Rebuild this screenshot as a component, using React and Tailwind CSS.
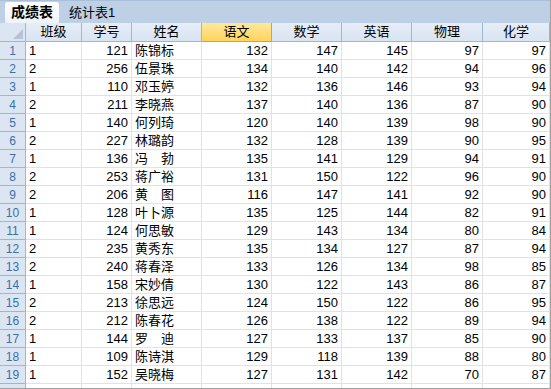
import React from "react";

const rows = [
  ["1", "121", "陈锦标", 132, 147, 145, 97, 97],
  ["2", "256", "伍景珠", 134, 140, 142, 94, 96],
  ["1", "110", "邓玉婷", 132, 136, 146, 93, 94],
  ["2", "211", "李晓燕", 137, 140, 136, 87, 90],
  ["1", "140", "何列琦", 120, 140, 139, 98, 90],
  ["2", "227", "林璐韵", 132, 128, 139, 90, 95],
  ["1", "136", "冯　勃", 135, 141, 129, 94, 91],
  ["2", "253", "蒋广裕", 131, 150, 122, 96, 90],
  ["2", "206", "黄　图", 116, 147, 141, 92, 90],
  ["1", "128", "叶卜源", 135, 125, 144, 82, 91],
  ["1", "124", "何思敏", 129, 143, 134, 80, 84],
  ["2", "235", "黄秀东", 135, 134, 127, 87, 94],
  ["2", "240", "蒋春泽", 133, 126, 134, 98, 85],
  ["1", "158", "宋妙倩", 130, 122, 143, 86, 87],
  ["2", "213", "徐思远", 124, 150, 122, 86, 95],
  ["2", "212", "陈春花", 126, 138, 122, 89, 94],
  ["1", "144", "罗　迪", 127, 133, 137, 85, 90],
  ["1", "109", "陈诗淇", 129, 118, 139, 88, 80],
  ["1", "152", "吴晓梅", 127, 131, 142, 70, 87],
];

const headers = ["班级", "学号", "姓名", "语文", "数学", "英语", "物理", "化学"];
const widths = ["w-[56px]", "w-[50px]", "w-[70px]", "w-[70px]", "w-[70px]", "w-[70px]", "w-[71px]", "w-[67px]"];

const font = { fontFamily: '"Liberation Sans", "Noto Sans CJK SC", sans-serif' };

export default function App() {
  return (
    <div className="w-[551px] h-[389px] overflow-hidden bg-white flex flex-col text-[13px] text-black border-r border-b border-[#a0a0a0]" style={font}>
      {/* tabs */}
      <div className="h-[23px] shrink-0 bg-[#bed0e6] flex items-end pl-[5px] gap-[4px] border-t border-[#a9bfd9]">
        <div className="h-[21px] px-[6px] flex items-center bg-gradient-to-b from-white to-[#eef3fa] rounded-t-[3px] font-bold text-[14px]">
          成绩表
        </div>
        <div className="h-[21px] px-[6px] flex items-center text-[13px]">统计表1</div>
      </div>

      {/* header */}
      <div className="flex h-[19px] shrink-0">
        <div className="w-[26px] shrink-0 relative bg-[#dce6f2] border-r border-b border-[#9eb6ce]">
          <div className="absolute right-[2px] bottom-[2px] w-0 h-0 border-l-[10px] border-l-transparent border-b-[10px] border-b-[#b4c4d6]" />
        </div>
        {headers.map((h, i) => (
          <div
            key={h}
            className={`${widths[i]} shrink-0 flex items-center justify-center border-r border-b ${
              i === 3
                ? "bg-gradient-to-b from-[#ffe89a] to-[#ffd45a] border-[#e0a030]"
                : "bg-gradient-to-b from-[#e6eef8] to-[#d8e4f1] border-[#9eb6ce]"
            }`}
          >
            {h}
          </div>
        ))}
      </div>

      {/* body */}
      <div className="flex flex-col">
        {rows.map((r, ri) => (
          <div key={ri} className="flex h-[18px] shrink-0">
            <div className="w-[26px] shrink-0 flex items-center justify-center bg-[#dce6f2] border-r border-b border-[#9eb6ce] text-[#3d6ea8] text-[12px]">
              {ri + 1}
            </div>
            {r.map((v, ci) => (
              <div
                key={ci}
                className={`${widths[ci]} shrink-0 flex items-center px-[3px] border-r border-b border-[#e2e2e2] ${
                  ci === 0 || ci === 2 ? "justify-start" : "justify-end"
                }`}
              >
                {v}
              </div>
            ))}
          </div>
        ))}
        {/* partly visible next row */}
        <div className="flex h-[18px] shrink-0">
          <div className="w-[26px] shrink-0 bg-[#dce6f2] border-r border-[#9eb6ce]" />
          {widths.map((w, ci) => (
            <div key={ci} className={`${w} shrink-0 border-r border-[#e2e2e2]`} />
          ))}
        </div>
      </div>
    </div>
  );
}
